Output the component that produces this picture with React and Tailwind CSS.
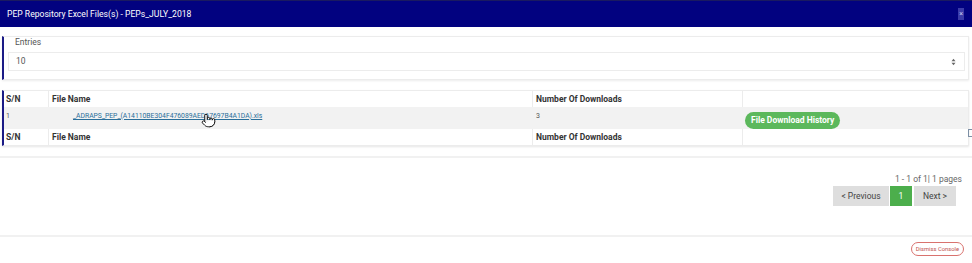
import React from "react";
import { Pointer } from "lucide-react";

export default function App() {
  const font = { fontFamily: "Roboto, 'Liberation Sans', Arial, sans-serif" };
  return (
    <div className="relative w-[972px] h-[263px] overflow-hidden bg-white" style={font}>
      {/* header */}
      <div className="h-[27px] bg-[#020280] flex items-center justify-between pl-[7px] pr-[8px] border-t border-[#1a1a60]">
        <span className="text-[8.6px] text-white">PEP Repository Excel Files(s) - PEPs_JULY_2018</span>
        <span className="w-[6px] h-[12px] bg-[#3b3ba8] text-[7px] leading-[12px] text-[#c8c8ee] flex items-center justify-center">×</span>
      </div>

      {/* entries panel */}
      <div className="mt-[9px] mx-[2px] mr-[3px] h-[44px] border border-[#ececec] border-l-2 border-l-[#1b1b86] shadow-[0_1px_2px_rgba(0,0,0,0.08)] pl-[4px] pr-[3px]">
        <div className="pl-[7px] h-[15px] text-[8.5px] leading-[11px] text-[#555]">Entries</div>
        <div className="h-[19px] border border-[#ececec] flex items-center justify-between pl-[7px] pr-[8px]">
          <span className="text-[8.5px] text-[#555]">10</span>
          <svg width="5" height="8" viewBox="0 0 5 8">
            <path d="M0.5 3.2 L2.5 0.8 L4.5 3.2 Z" fill="#666" />
            <path d="M0.5 4.8 L2.5 7.2 L4.5 4.8 Z" fill="#666" />
          </svg>
        </div>
      </div>

      {/* table panel */}
      <div className="mt-[10px] mx-[2px] mr-[3px] border border-[#ececec] border-l-2 border-l-[#1b1b86] shadow-[0_1px_2px_rgba(0,0,0,0.1)]">
        <div className="flex h-[16px] items-center text-[8.5px] font-bold text-[#333]">
          <div className="w-[45px] pl-[2px] border-r border-[#ececec] h-full flex items-center">S/N</div>
          <div className="w-[484px] pl-[3px] border-r border-[#ececec] h-full flex items-center">File Name</div>
          <div className="w-[210px] pl-[3px] border-r border-[#ececec] h-full flex items-center">Number Of Downloads</div>
          <div className="flex-1 h-full"></div>
        </div>
        <div className="flex h-[22px] items-center bg-[#f2f2f2] text-[#555]">
          <div className="w-[45px] pl-[2px] text-[7px] leading-[8px] mt-[-4px]">1</div>
          <div className="w-[484px] pl-[24px] flex items-center leading-[8px] mt-[-4px]">
            <span className="text-[6.8px] text-[#2a6f9a] underline">_ADRAPS_PEP_(A14110BE304F476089AED67697B4A1DA).xls</span>
          </div>
          <div className="w-[210px] pl-[3px] text-[7px] leading-[8px] mt-[-4px]">3</div>
          <div className="flex-1 pl-[2px]">
            <span className="inline-flex items-center h-[17px] px-[6px] rounded-full bg-[#5cb85c] text-white text-[8.5px] font-bold">File Download History</span>
          </div>
        </div>
        <div className="flex h-[16px] items-center text-[8.5px] font-bold text-[#333]">
          <div className="w-[45px] pl-[2px] border-r border-[#ececec] h-full flex items-center">S/N</div>
          <div className="w-[484px] pl-[3px] border-r border-[#ececec] h-full flex items-center">File Name</div>
          <div className="w-[210px] pl-[3px] border-r border-[#ececec] h-full flex items-center">Number Of Downloads</div>
          <div className="flex-1 h-full"></div>
        </div>
      </div>

      {/* pagination area */}
      <div className="mt-[10px] border-t-2 border-[#f1f1f1] h-[79px] flex flex-col items-end pr-[16px] pt-[15px]">
        <div className="text-[8.5px] text-[#666] mr-[-6px] leading-[12px]">1 - 1 of 1| 1 pages</div>
        <div className="flex mt-[1px] h-[20px] text-[8.5px] text-[#444]">
          <div className="w-[56px] bg-[#dedede] flex items-center justify-center">&lt; Previous</div>
          <div className="w-[22px] ml-[1px] bg-[#4cae4c] text-white flex items-center justify-center">1</div>
          <div className="w-[42px] ml-[2px] bg-[#dedede] flex items-center justify-center">Next &gt;</div>
        </div>
      </div>
      <div className="border-t-2 border-[#f1f1f1] flex justify-end pr-[8px] pt-[5px]">
        <span className="h-[14px] px-[4px] rounded-full border border-[#d9726e] text-[5.8px] text-[#c0504d] flex items-center">Dismiss Console</span>
      </div>

      {/* overlays */}
      <div className="absolute left-[201px] top-[113px]">
        <Pointer size={15} strokeWidth={1.6} color="#111" fill="#fff" />
      </div>
      <div className="absolute left-[968px] top-[129px] w-[6px] h-[8px] border border-[#7d8fa5]"></div>
    </div>
  );
}
